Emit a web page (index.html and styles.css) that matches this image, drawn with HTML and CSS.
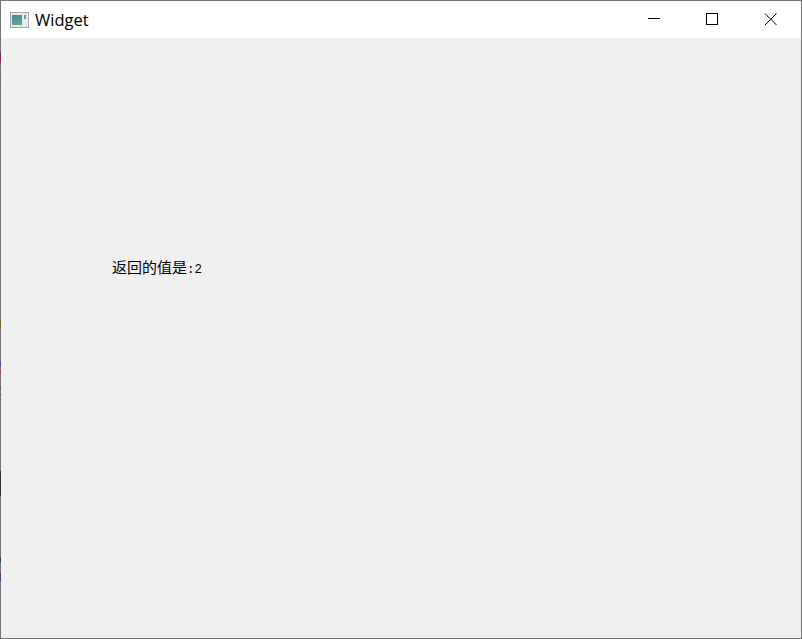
FILE: index.html
```html
<!DOCTYPE html>
<html lang="zh">
<head>
<meta charset="utf-8">
<title>Widget</title>
<link rel="stylesheet" href="styles.css">
</head>
<body>
<div class="window">
  <header class="titlebar">
    <svg class="app-icon" width="19" height="16" viewBox="0 0 19 16">
      <defs>
        <linearGradient id="pane" x1="0" y1="0" x2="0.3" y2="1">
          <stop offset="0" stop-color="#4a7f9c"/>
          <stop offset="1" stop-color="#62a886"/>
        </linearGradient>
      </defs>
      <rect x="0.5" y="0.5" width="18" height="15" fill="#e6e8ea" stroke="#a9a9ae"/>
      <rect x="2" y="2" width="15" height="12" fill="#e4ebee"/>
      <rect x="2" y="3" width="10" height="10" fill="url(#pane)"/>
      <rect x="14" y="3" width="2" height="4" fill="#5a9f98"/>
    </svg>
    <span class="title">Widget</span>
    <div class="controls">
      <svg class="control" width="58" height="37" viewBox="0 0 58 37"><path d="M22 17.5h12" stroke="#000" fill="none"/></svg>
      <svg class="control" width="58" height="37" viewBox="0 0 58 37"><rect x="22.5" y="12.5" width="11" height="11" stroke="#000" fill="none"/></svg>
      <svg class="control" width="58" height="37" viewBox="0 0 58 37"><path d="M23 12.500l11.500 11.500M34.500 12.500l-11.500 11.500" stroke="#000" fill="none" stroke-width="1"/></svg>
    </div>
  </header>
  <main class="client">
    <p class="label">返回的值是<span class="latin">:2</span></p>
  </main>
</div>
</body>
</html>
```

FILE: styles.css
```css
* { box-sizing: border-box; }
html, body { margin: 0; padding: 0; }
body { width: 802px; height: 639px; overflow: hidden; background: #f0f0f0; }

.window {
  width: 802px;
  height: 639px;
  display: flex;
  flex-direction: column;
  padding: 1px;
  background-color: #747474;
  background-image: linear-gradient(to bottom,
    transparent 52px, #7c2a5e 52px, #7c2a5e 63px, transparent 63px,
    transparent 77px, #3d6a6a 77px, #3d6a6a 78px, transparent 78px,
    transparent 79px, #8a6a5c 79px, #8a6a5c 85px, transparent 85px,
    transparent 320px, #7a6410 320px, #7a6410 327px, transparent 327px,
    transparent 362px, #6a3f8c 362px, #6a3f8c 367px, transparent 367px,
    transparent 370px, #a03a78 370px, #a03a78 373px, transparent 373px,
    transparent 387px, #3a3a3a 387px, #3a3a3a 388px, transparent 388px,
    transparent 394px, #2f3f8a 394px, #2f3f8a 395px, transparent 395px,
    transparent 471px, #333 471px, #333 496px, transparent 496px,
    transparent 557px, #1f3f94 557px, #1f3f94 562px, transparent 562px,
    transparent 573px, #7a2f6a 573px, #7a2f6a 580px, #23379a 580px, #23379a 581px, transparent 581px);
  background-size: 1px 100%;
  background-repeat: no-repeat;
}

.titlebar {
  flex: none;
  height: 37px;
  display: flex;
  align-items: center;
  padding-left: 9px;
  background: #fff;
}

.app-icon { flex: none; margin-top: 1px; }

.title {
  margin-left: 6px;
  font-family: "Open Sans", "Liberation Sans", sans-serif;
  font-size: 16.5px;
  line-height: 20px;
  color: #000;
}

.controls { margin-left: auto; display: flex; margin-right: 1px; }
.control { display: block; flex: none; }

.client {
  flex: 1;
  background: #f0f0f0;
  padding: 219px 0 0 111px;
}

.label {
  margin: 0;
  font-family: "Noto Sans CJK SC", sans-serif;
  font-size: 15px;
  font-weight: 400;
  line-height: 20px;
  color: #000;
}

.latin {
  font-family: "Liberation Mono", monospace;
  font-size: 12.5px;
}
```
